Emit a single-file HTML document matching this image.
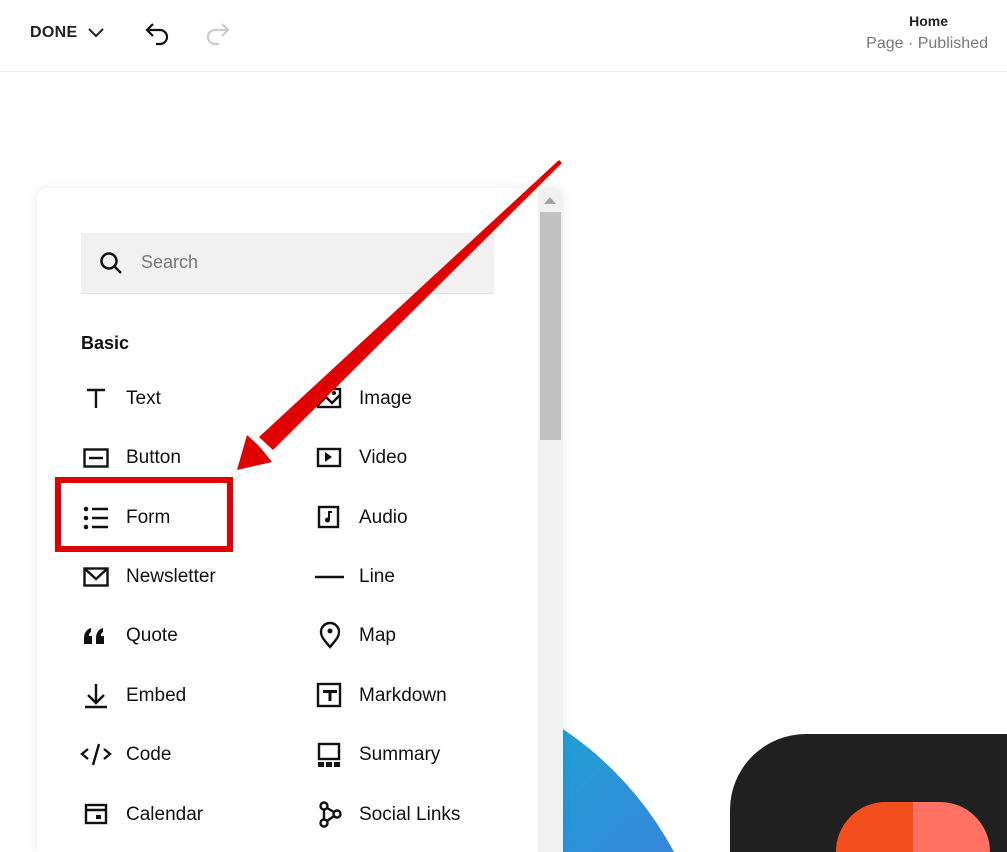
<!DOCTYPE html>
<html><head><style>
*{margin:0;padding:0;box-sizing:border-box}
html,body{width:1007px;height:852px;overflow:hidden}
body{background:#fff;font-family:"Liberation Sans",sans-serif;position:relative;color:#111}
.top{position:absolute;left:0;top:0;width:1007px;height:72px;border-bottom:1px solid #ebebeb}
.abs{position:absolute}
.clip{position:absolute;left:0;top:0;width:1007px;height:852px;overflow:hidden}
.panel{position:absolute;left:37px;top:188px;width:526px;height:664px;background:#fff;border-radius:10px 10px 0 0;box-shadow:0 0 10px rgba(0,0,0,.08);overflow:hidden}
.row{position:absolute;font-size:19px;color:#111;line-height:20px}
</style></head><body>
<div class="top">
 <div class="abs" style="left:30px;top:24px;font-size:16px;font-weight:bold;color:#222;letter-spacing:.3px">DONE</div>
 <svg class="abs" style="left:88px;top:27px" width="16" height="12" viewBox="0 0 16 12"><path d="M1 2l7 7 7-7" fill="none" stroke="#222" stroke-width="2"/></svg>
 <svg class="abs" style="left:144px;top:21px" width="28" height="26" viewBox="0 0 28 26"><path d="M9 3L3 9l6 6M3 9h13a7 7 0 0 1 0 14h-4" fill="none" stroke="#111" stroke-width="2.2"/></svg>
 <svg class="abs" style="left:203px;top:21px" width="28" height="26" viewBox="0 0 28 26"><path d="M19 3l6 6-6 6M25 9H12a7 7 0 0 0 0 14h4" fill="none" stroke="#ccc" stroke-width="2.2"/></svg>
 <div class="abs" style="right:59px;top:13px;font-size:14px;font-weight:bold;color:#222">Home</div>
 <div class="abs" style="right:19px;top:35px;font-size:16px;color:#777">Page · Published</div>
</div>

<div class="clip">
<div class="abs" style="left:25px;top:670px;width:690px;height:690px;border-radius:50%;background:linear-gradient(135deg,#0fb5cf 30%,#4a6fe0 75%)"></div>
<div class="abs" style="left:730px;top:734px;width:277px;height:118px;border-radius:76px 0 0 0;background:#202020"></div>
<div class="abs" style="left:836px;top:802px;width:154px;height:50px;border-radius:50px 50px 0 0;overflow:hidden;background:#ff7262"><div style="width:77px;height:50px;background:#f24e1e"></div></div>
</div>

<div class="panel">
 <div class="abs" style="left:501px;top:0;width:25px;height:664px;background:#f1f1f1"></div>
 <div class="abs" style="left:503px;top:24px;width:21px;height:228px;background:#c1c1c1"></div>
 <svg class="abs" style="left:507px;top:9px" width="12" height="7"><path d="M0 7L6 0l6 7z" fill="#a3a3a3"/></svg>
 <div class="abs" style="left:44px;top:45px;width:413px;height:61px;background:#f1f1f1;border-bottom:1px solid #ddd"></div>
 <svg class="abs" style="left:62px;top:63px" width="24" height="24" viewBox="0 0 24 24"><circle cx="10" cy="10" r="7.5" fill="none" stroke="#111" stroke-width="2.5"/><path d="M15.5 15.5L22 22" stroke="#111" stroke-width="2.5"/></svg>
 <div class="abs" style="left:104px;top:64px;font-size:18px;color:#777">Search</div>
 <div class="abs" style="left:44px;top:145px;font-size:18px;font-weight:bold;color:#111">Basic</div>
</div>

<div class="row" style="left:126px;top:389px">Text</div>
<div class="row" style="left:126px;top:448px">Button</div>
<div class="row" style="left:126px;top:508px">Form</div>
<div class="row" style="left:126px;top:567px">Newsletter</div>
<div class="row" style="left:126px;top:626px">Quote</div>
<div class="row" style="left:126px;top:686px">Embed</div>
<div class="row" style="left:126px;top:745px">Code</div>
<div class="row" style="left:126px;top:805px">Calendar</div>
<div class="row" style="left:359px;top:389px">Image</div>
<div class="row" style="left:359px;top:448px">Video</div>
<div class="row" style="left:359px;top:508px">Audio</div>
<div class="row" style="left:359px;top:567px">Line</div>
<div class="row" style="left:359px;top:626px">Map</div>
<div class="row" style="left:359px;top:686px">Markdown</div>
<div class="row" style="left:359px;top:745px">Summary</div>
<div class="row" style="left:359px;top:805px">Social Links</div>

<svg class="abs" style="left:0;top:0" width="1007" height="852" viewBox="0 0 1007 852">
 <g fill="none" stroke="#111" stroke-width="2.4">
  <path d="M87 390h18M96 390v18" />
  <rect x="84.5" y="449.5" width="23" height="17"/><path d="M89 458h14"/>
  <path d="M92 509h16M92 518h16M92 527h16"/>
  <rect x="84.5" y="568.5" width="23" height="17"/><path d="M85 569l11 10 11-10"/>
  <path d="M96 684v19M88 695l8 8 8-8M85 707h22"/>
  <path d="M88 749l-6 5 6 5M104 749l6 5-6 5M99 744l-6 21"/>
  <rect x="86" y="805" width="20" height="18"/><path d="M86 810h20"/>
  <rect x="318" y="389" width="22" height="18"/><path d="M318 405l8-8 6 6 8-8"/>
  <rect x="318" y="449" width="22" height="17"/>
  <rect x="319" y="507" width="19" height="20"/>
  <path d="M315 577h29"/>
  <path d="M330 647c-5-6-9-10-9-15a9 9 0 0 1 18 0c0 5-4 9-9 15z"/>
  <rect x="318" y="684" width="22" height="22"/>
  <rect x="319" y="744" width="20" height="15"/>
  <circle cx="324" cy="806" r="3.5"/><circle cx="337" cy="814" r="3.5"/><circle cx="324" cy="823" r="3.5"/><path d="M324 810v9M327 808l7 4M327 821l7-5"/>
 </g>
 <g fill="#111">
  <circle cx="86" cy="509" r="2.3"/><circle cx="86" cy="518" r="2.3"/><circle cx="86" cy="527" r="2.3"/>
  <path d="M84 644v-6c0-5 3-9 7-10v4c-1.5 1-2 2-2 4h3v8z M96 644v-6c0-5 3-9 7-10v4c-1.5 1-2 2-2 4h3v8z"/>
  <rect x="96" y="815" width="5" height="4"/>
  <path d="M325 452l7 5-7 5z"/>
  <path d="M330 510v10a2.5 2.5 0 1 1-2-2.4V511h4v2h-2z"/>
  <circle cx="330" cy="631" r="2.5"/>
  <path d="M323 690h14v3h-5.5v8h-3v-8H323z"/>
  <rect x="318" y="762" width="6" height="5"/><rect x="326" y="762" width="6" height="5"/><rect x="334" y="762" width="6" height="5"/>
  <circle cx="334" cy="393" r="2"/>
 </g>
 <rect x="58" y="480" width="172" height="69" fill="none" stroke="#e00000" stroke-width="6"/>
 <polygon points="559,160 562,163 273,450 259,437" fill="#e00000"/>
 <polygon points="237,470 247,435 258,445 264,452 272,462" fill="#e00000"/>
</svg>
</body></html>
